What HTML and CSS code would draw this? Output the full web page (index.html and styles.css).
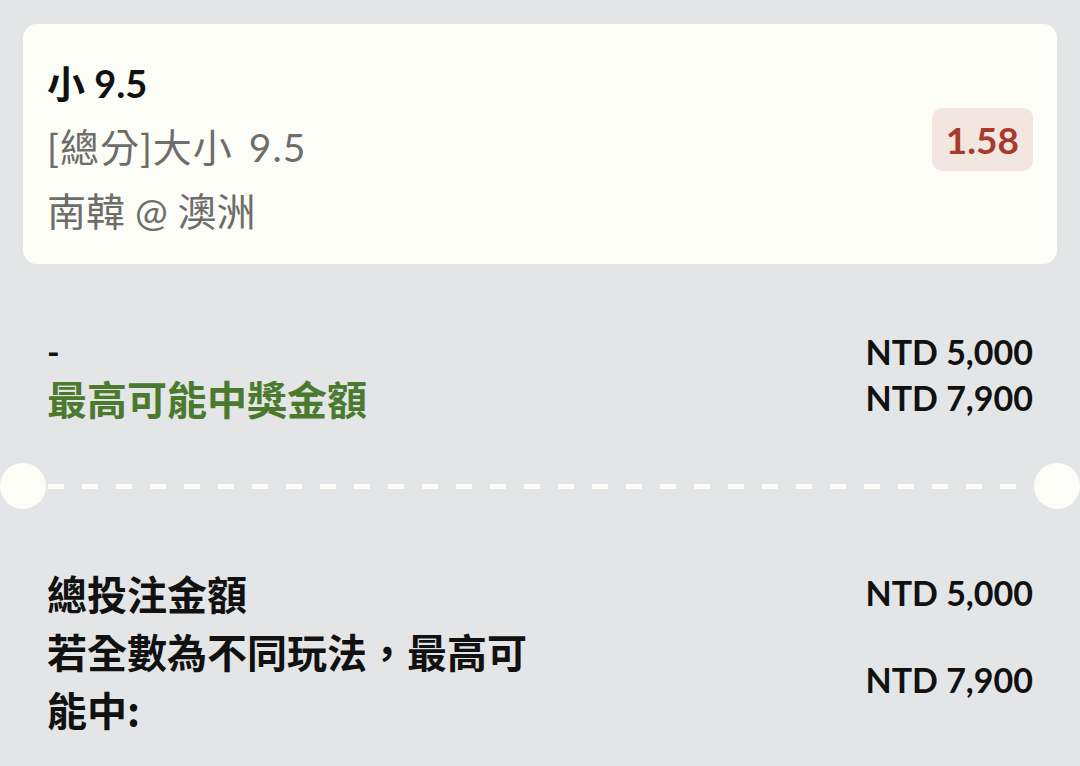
FILE: index.html
```html
<!DOCTYPE html>
<html lang="zh-Hant">
<head>
<meta charset="utf-8">
<link rel="stylesheet" href="styles.css">
</head>
<body>
<div class="page">
  <section class="card">
    <div class="card-info">
      <div class="sel">小 9.5</div>
      <div class="market">[總分]大小 9.5</div>
      <div class="match">南韓 @ 澳洲</div>
    </div>
    <div class="odds">1.58</div>
  </section>

  <section class="summary">
    <div class="label dash">-</div>
    <div class="value">NTD 5,000</div>
    <div class="label green">最高可能中獎金額</div>
    <div class="value">NTD 7,900</div>
  </section>

  <div class="divider">
    <span class="notch"></span>
    <span class="dashes"></span>
    <span class="notch"></span>
  </div>

  <section class="totals">
    <div class="label big">總投注金額</div>
    <div class="value">NTD 5,000</div>
    <div class="label big">若全數為不同玩法，最高可能中:</div>
    <div class="value">NTD 7,900</div>
  </section>
</div>
</body>
</html>
```

FILE: styles.css
```css
* { box-sizing: border-box; }
html, body { margin: 0; padding: 0; }
body {
  background: #e4e5e7;
  font-family: Lato, "Noto Sans CJK TC", sans-serif;
  color: #111;
  width: 1080px;
  height: 766px;
  overflow: hidden;
}
.page {
  padding: 24px 23px 0;
}
.card {
  background: #fdfdf7;
  border-radius: 14px;
  padding: 27px 24px 21px;
  display: flex;
  align-items: center;
  justify-content: space-between;
}
.card-info {
  display: flex;
  flex-direction: column;
}
.sel {
  font-size: 38px;
  font-weight: 700;
  line-height: 64px;
  color: #111;
}
.market, .match {
  font-size: 39px;
  line-height: 64px;
  color: #6d6d6b;
}
.market {
  letter-spacing: 1px;
  word-spacing: 5px;
}
.odds {
  background: #f2e6e0;
  color: #a8392d;
  font-weight: 700;
  font-size: 37px;
  height: 63px;
  line-height: 63px;
  padding: 0 14px;
  border-radius: 10px;
  margin-bottom: 16px;
}
.summary {
  margin: 65px 24px 0;
  display: grid;
  grid-template-columns: 1fr auto;
  align-items: center;
}
.label {
  font-weight: 700;
  line-height: 46px;
}
.dash {
  font-size: 34px;
}
.green {
  color: #4b7a2f;
  font-size: 40px;
  font-family: "Noto Sans CJK TC", sans-serif;
}
.value {
  font-size: 34px;
  font-weight: 700;
  line-height: 46px;
  text-align: right;
  color: #111;
}
.divider {
  margin: 42px -23px 0;
  display: flex;
  align-items: center;
  height: 46px;
}
.notch {
  width: 46px;
  height: 46px;
  border-radius: 50%;
  background: #fdfdf7;
  flex: none;
}
.dashes {
  flex: 1;
  height: 5px;
  margin-left: 2px;
  background: repeating-linear-gradient(to right, #fdfdf7 0 16px, transparent 16px 34px);
}
.totals {
  margin: 55px 24px 0;
  display: grid;
  grid-template-columns: 1fr 1fr;
  align-items: center;
}
.big {
  font-family: "Noto Sans CJK TC", sans-serif;
  font-size: 40px;
  line-height: 58px;
}
.totals .value {
  line-height: 58px;
}
```
